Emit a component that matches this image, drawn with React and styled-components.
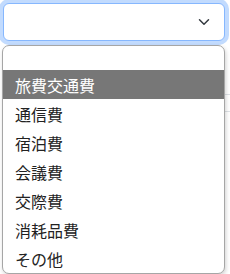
import React from "react";
import styled, { createGlobalStyle } from "styled-components";

const Global = createGlobalStyle`
  html, body { margin: 0; padding: 0; background: #fff; }
  body { font-family: "Noto Sans CJK JP", "Noto Sans", sans-serif; }
`;

const Page = styled.div`
  position: relative;
  width: 230px;
  height: 274px;
  overflow: hidden;
  padding: 3px 5px 0 3px;
  box-sizing: border-box;
`;

const Field = styled.div`
  position: relative;
`;

const SelectBox = styled.div`
  box-sizing: border-box;
  height: 38px;
  width: 222px;
  border: 1px solid #86b7fe;
  border-radius: 6px;
  background: #fff;
  box-shadow: 0 0 0 4px rgba(13, 110, 253, 0.25);
  display: flex;
  align-items: center;
  justify-content: flex-end;
  padding-right: 12px;
`;

const Chevron = styled.svg`
  width: 16px;
  height: 12px;
  display: block;
`;

const Behind = styled.div`
  margin-top: 4px;
  width: 227px;
`;

const BgRow = styled.div`
  height: ${(p) => p.$h}px;
  border-bottom: 1px solid #dee2e6;
  box-sizing: border-box;
`;

const Popup = styled.ul`
  position: absolute;
  top: 42px;
  left: -1px;
  width: 223px;
  margin: 0;
  padding: 0;
  list-style: none;
  box-sizing: border-box;
  background: #fff;
  border: 1px solid #a6a6a6;
  border-radius: 7px;
  overflow: hidden;
  box-shadow: 1px 2px 4px rgba(0, 0, 0, 0.18);
  z-index: 2;
`;

const Option = styled.li`
  height: ${(p) => (p.$empty ? 24 : 29)}px;
  display: flex;
  align-items: center;
  padding-left: 12px;
  font-size: 16px;
  color: ${(p) => (p.$active ? "#ffffff" : "#222222")};
  background: ${(p) => (p.$active ? "#777777" : "transparent")};
  white-space: nowrap;
`;

const options = ["旅費交通費", "通信費", "宿泊費", "会議費", "交際費", "消耗品費", "その他"];

export default function App() {
  return (
    <Page>
      <Global />
      <Field>
        <SelectBox>
          <Chevron viewBox="0 0 16 16" aria-hidden="true">
            <path
              d="M2 5l6 6 6-6"
              fill="none"
              stroke="#343a40"
              strokeWidth="2"
              strokeLinecap="round"
              strokeLinejoin="round"
            />
          </Chevron>
        </SelectBox>
        <Popup>
          <Option $empty />
          {options.map((o, i) => (
            <Option key={o} $active={i === 0}>
              {o}
            </Option>
          ))}
        </Popup>
      </Field>
      <Behind>
        <BgRow $h={50} />
        <BgRow $h={17} />
      </Behind>
    </Page>
  );
}
